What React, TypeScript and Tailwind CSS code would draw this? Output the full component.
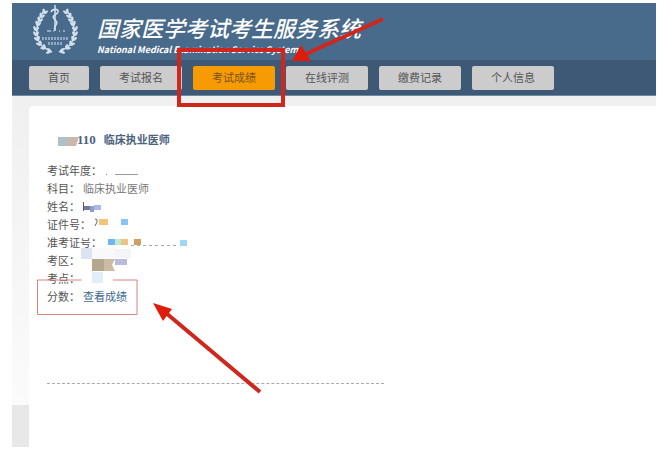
const navItems = ["首页", "考试报名", "考试成绩", "在线评测", "缴费记录", "个人信息"];

interface InfoRow {
  label: string;
  value?: string;
  href?: string;
}

const infoRows: InfoRow[] = [
  { label: "考试年度：" },
  { label: "科目：", value: "临床执业医师" },
  { label: "姓名：" },
  { label: "证件号：" },
  { label: "准考证号：" },
  { label: "考区：" },
  { label: "考点：" },
  { label: "分数：", value: "查看成绩", href: "#score" },
];

// leaves of the laurel, mirrored for the right side
const leaves = [
  [13, 8, 25],
  [10, 12, 28],
  [8, 16, 22],
  [6, 20, 15],
  [4, 25, 5],
  [4, 30, -5],
  [5, 35, -20],
  [7, 40, -35],
  [11, 44, -55],
  [16, 48, -80],
];

function LaurelSide() {
  return (
    <g>
      <path d="M13 7C4 17 2 33 9 42c3 3 7 5 11 7" fill="none" stroke="#d3e0ec" strokeWidth="1.5" />
      {leaves.map(([x, y, angle]) => (
        <g key={y} transform={`translate(${x} ${y}) rotate(${angle})`}>
          <ellipse cx="-1.3" cy="0" rx="1.3" ry="2.6" transform="rotate(-28)" />
          <ellipse cx="1.6" cy="0" rx="1.2" ry="2.4" transform="rotate(28)" />
        </g>
      ))}
    </g>
  );
}

function Logo() {
  return (
    <svg viewBox="0 0 48 52" className="h-[52px] w-12 shrink-0" fill="#d3e0ec" aria-hidden="true">
      <LaurelSide />
      <g transform="translate(47 0) scale(-1 1)">
        <LaurelSide />
      </g>
      <path d="M23 2v26" stroke="#d3e0ec" strokeWidth="1.5" />
      <path
        d="M19 9c2-4 8-3 7 0s-6 3-4.500 6 4.500 3 3 6-3 3-1.500 6"
        fill="none"
        stroke="#d3e0ec"
        strokeWidth="1.6"
      />
      <path d="M15 28h4M21 28h1M27 28h1M31 28h2" stroke="#a9bdd0" strokeWidth="1.5" />
      <path d="M10 35.500h27M16 40.500h15" stroke="#93abc2" strokeWidth="3" strokeDasharray="2 1" />
    </svg>
  );
}

// mosaic blocks that hide personal data
function Mosaic() {
  return (
    <svg className="pointer-events-none absolute left-0 top-0" width="240" height="200" aria-hidden="true">
      <g transform="translate(-29 -106)">
        <rect x="58" y="137" width="9" height="9" fill="#afbfc6" />
        <path d="M67 137h12l-3 9h-9z" fill="#c8b9ae" />
        <rect x="106" y="174" width="1" height="1" fill="#888" />
        <path d="M115 174.500h23" stroke="#9a9a9a" />
        <path d="M83.500 202v9" stroke="#55566f" />
        <rect x="84" y="206" width="6" height="4" fill="#7479a0" />
        <rect x="90" y="206" width="4" height="6" fill="#929bcb" />
        <rect x="94" y="205" width="7" height="5" fill="#a9b8e8" />
        <path d="M95 219q3 0 2 3l-2 4" fill="none" stroke="#666" />
        <rect x="99" y="219" width="9" height="6" fill="#f3c478" />
        <rect x="121" y="219" width="7" height="6" fill="#88c3fa" />
        <rect x="81" y="234" width="9" height="4" fill="#fff" />
        <rect x="108" y="239" width="7" height="6" fill="#70b7f2" />
        <rect x="115" y="239" width="6" height="6" fill="#bfe9d2" />
        <rect x="121" y="239" width="7" height="6" fill="#eec37f" />
        <rect x="134" y="239" width="7" height="6" fill="#cf9e63" />
        <path d="M131 245.500h48" stroke="#aaa" strokeDasharray="3 3" />
        <rect x="180" y="240" width="7" height="6" fill="#9cd7f5" />
        <rect x="81" y="248" width="11" height="11" fill="#dde4f1" />
        <rect x="92" y="248" width="23" height="11" fill="#f9f9fc" />
        <rect x="115" y="249" width="16" height="9" fill="#f4f4f9" />
        <rect x="92" y="259" width="12" height="12" fill="#b3a78e" />
        <path d="M104 259h11l-3 6 3 6h-11z" fill="#cdbba3" />
        <rect x="115" y="259" width="12" height="6" fill="#b8bcda" />
        <rect x="92" y="272" width="11" height="11" fill="#e2eff8" />
      </g>
    </svg>
  );
}

function Arrows() {
  return (
    <svg className="pointer-events-none absolute left-0 top-0" width="400" height="400" aria-hidden="true">
      <g stroke="#cf261d" strokeWidth="4">
        <path d="M383 19L306 54" />
        <path d="M260 392L166 313" />
      </g>
      <g fill="#de1c0c">
        <path d="M292 61L301 45L311 61z" />
        <path d="M153 303L172 309L163 321z" />
      </g>
    </svg>
  );
}

export default function App() {
  return (
    <div className="relative bg-white pt-[3px] pr-[13px] pb-[7px] pl-3 font-['Noto_Sans_CJK_SC',sans-serif] text-[11px] text-[#555]">
      <header className="flex h-[57px] items-start bg-[#486a8b] pl-5 text-white">
        <Logo />
        <div className="pt-2 pl-[17px] italic">
          <h1 className="text-[22px] leading-8 font-medium whitespace-nowrap">国家医学考试考生服务系统</h1>
          <p className="text-[9px] leading-[13px] font-bold whitespace-nowrap">
            National Medical Examination Service System
          </p>
        </div>
      </header>

      <nav className="flex h-9 items-center gap-[11px] border-b border-[#6f8aa3] bg-[#3d5975] pl-[17px]">
        {navItems.map((item, i) => (
          <div key={item} className="relative">
            <button
              type="button"
              className={
                item === "考试成绩"
                  ? "block h-6 w-[82px] rounded-xs bg-[#f79b04] text-[#7b5216]"
                  : i === 0
                    ? "block h-6 w-[60px] rounded-xs bg-[#cccccd] text-[#555]"
                    : "block h-6 w-[82px] rounded-xs bg-[#cccccd] text-[#555]"
              }
            >
              {item}
            </button>
            {item === "考试成绩" && (
              <span className="pointer-events-none absolute -top-[18px] -right-[10px] -bottom-[17px] -left-4 z-10 border-4 border-[#cf261d]" />
            )}
          </div>
        ))}
      </nav>

      <div className="bg-[#f0f0f1] pt-2.5">
        <div className="flex bg-[#f0f0f1]">
          <div className="flex w-[17px] shrink-0 flex-col">
            <div className="flex-1 bg-linear-to-b from-[#f0f0f1] to-[#fbfbfb]" />
            <div className="h-[42px] bg-[#e8e8e8]" />
          </div>

          <main className="relative flex-1 rounded-tl-sm bg-white px-[18px] pt-6 pb-[63px]">
            <h2 className="pl-[30px] leading-[18px] font-bold text-[#4b637c]">
              <span className="mr-2 font-['Liberation_Serif',serif] text-[13px]">110</span>
              临床执业医师
            </h2>

            <dl className="pt-3">
              {infoRows.map((row) => (
                <div key={row.label} className="relative flex gap-[3px] leading-[18px]">
                  <dt>{row.label}</dt>
                  <dd className="text-[#777]">
                    {row.href ? (
                      <a href={row.href} className="text-[#41698f]">
                        {row.value}
                      </a>
                    ) : (
                      row.value
                    )}
                  </dd>
                  {row.href && (
                    <svg className="absolute -top-2 -left-[10px]" width="101" height="37" aria-hidden="true">
                      <path d="M44.500 1H.5V35.500H100V1H76" fill="none" stroke="#d98282" strokeWidth="1" />
                    </svg>
                  )}
                </div>
              ))}
            </dl>

            <div className="mt-[78px] w-[337px] border-t border-dashed border-[#aaa]" />
            <Mosaic />
          </main>
        </div>
      </div>
      <Arrows />
    </div>
  );
}
